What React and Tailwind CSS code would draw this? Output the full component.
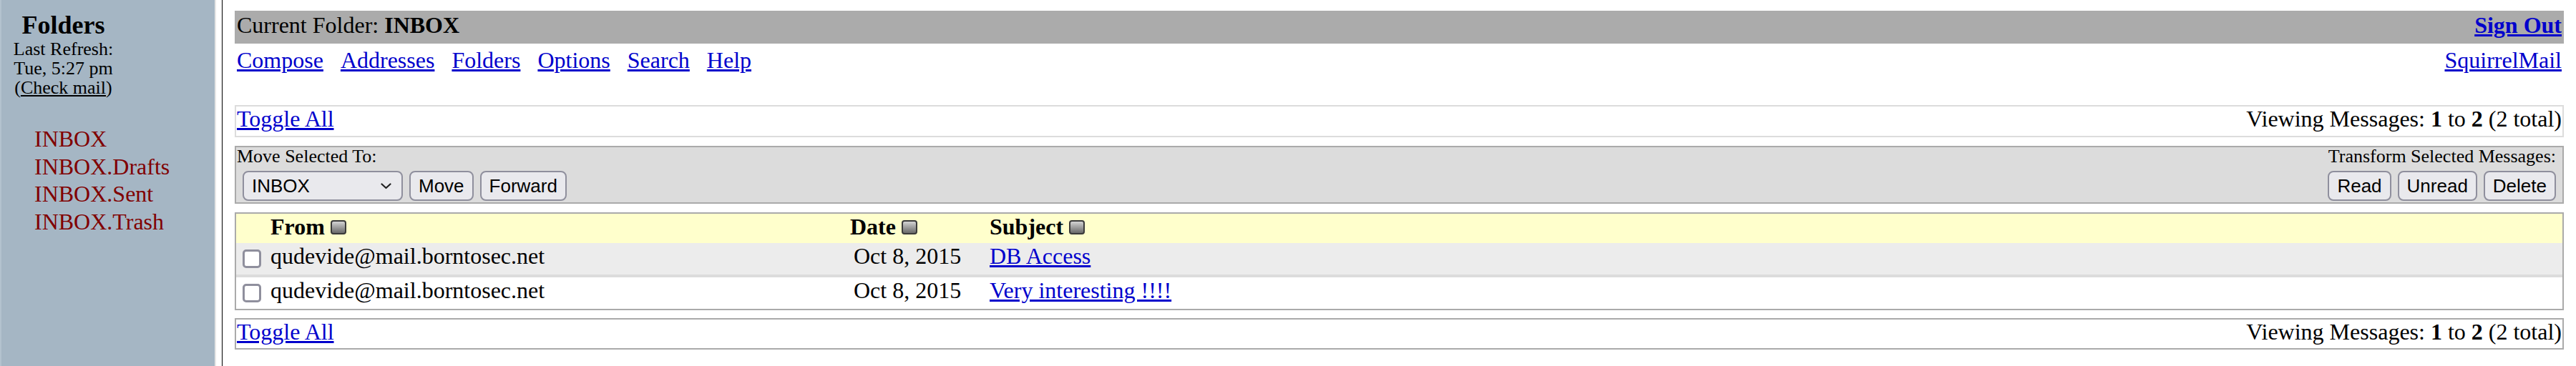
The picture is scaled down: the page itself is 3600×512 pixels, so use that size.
import React from 'react';

const link = 'text-[#0000cc] underline';

// little sort toggle next to the column names
function SortIcon() {
  return (
    <span className="inline-block w-[22px] h-[20px] ml-[8px] align-baseline rounded-[4px] border-2 border-[#3a3a3a] bg-linear-to-b from-[#d4d4d4] to-[#6a6a6a]" />
  );
}

function Check() {
  return <span className="block w-[26px] h-[26px] rounded-[5px] border-[3px] border-[#8f8f9d] bg-white" />;
}

function Btn({ children }) {
  return (
    <button className="h-[42px] px-[11px] rounded-[8px] border-2 border-[#8f8f9d] bg-[#e9e9ed] text-[26px] leading-none text-black font-['Liberation_Sans',Arial,sans-serif]">
      {children}
    </button>
  );
}

function ToggleBar({ light }) {
  return (
    <div className={`flex justify-between items-start px-[1px] border-2 ${light ? 'h-[45px] border-[#dcdcdc]' : 'h-[44px] border-[#aaaaaa]'} leading-[35px]`}>
      <a className={link}>Toggle All</a>
      <span>
        Viewing Messages: <b>1</b> to <b>2</b> (2 total)
      </span>
    </div>
  );
}

const messages = [
  { from: 'qudevide@mail.borntosec.net', date: 'Oct 8, 2015', subject: 'DB Access', bg: 'bg-[#ececec]' },
  { from: 'qudevide@mail.borntosec.net', date: 'Oct 8, 2015', subject: 'Very interesting !!!!', bg: 'bg-white' },
];

export default function App() {
  return (
    <div className="flex w-[3600px] h-[512px] bg-white text-black font-['Liberation_Serif','Times_New_Roman',serif] text-[32px]">
      {/* Left frame */}
      <aside className="w-[300px] h-full shrink-0 bg-[#a5b6c4] border-l-2 border-[#b3c2ce]">
        <div className="w-[173px] text-center pt-[15px]">
          <div className="text-[36px] font-bold leading-[40px]">Folders</div>
          <div className="text-[26px] leading-[27px]">
            Last Refresh:<br />
            Tue, 5:27 pm<br />
            (<a className="underline">Check mail</a>)
          </div>
        </div>
        <ul className="mt-[39px] pl-[46px] text-[#800000] leading-[38.5px]">
          <li>INBOX</li>
          <li>INBOX.Drafts</li>
          <li>INBOX.Sent</li>
          <li>INBOX.Trash</li>
        </ul>
      </aside>

      {/* frame border */}
      <div className="w-[11px] h-full shrink-0 border-l-2 border-[#e6e6e6] border-r border-r-black" />

      {/* Right frame */}
      <main className="flex-1 min-w-0 px-[17px] pt-[15px]">
        <div className="h-[46px] bg-[#ababab] flex justify-between px-[3px] pt-[2px] leading-[37px]">
          <span>
            Current Folder: <b>INBOX</b>
          </span>
          <a className={`${link} font-bold`}>Sign Out</a>
        </div>

        <div className="mt-[5px] flex justify-between px-[3px] leading-[37px]">
          <div className="flex gap-[24px]">
            {['Compose', 'Addresses', 'Folders', 'Options', 'Search', 'Help'].map((n) => (
              <a key={n} className={link}>{n}</a>
            ))}
          </div>
          <a className={link}>SquirrelMail</a>
        </div>

        <div className="mt-[44px]">
          <ToggleBar light />
        </div>

        {/* move / transform bar */}
        <div className="mt-[12px] h-[81px] border-2 border-[#aaaaaa] bg-[#dcdcdc] flex justify-between text-[26px]">
          <div className="pl-[1px]">
            <div className="leading-[25px]">Move Selected To:</div>
            <div className="mt-[8px] ml-[8px] flex gap-[9px]">
              <div className="w-[224px] h-[42px] rounded-[8px] border-2 border-[#8f8f9d] bg-[#e9e9ed] flex items-center justify-between pl-[11px] pr-[14px] font-['Liberation_Sans',Arial,sans-serif]">
                <span>INBOX</span>
                <svg width="15" height="9" viewBox="0 0 15 9" fill="none" stroke="#222" strokeWidth="2.2" strokeLinecap="round" strokeLinejoin="round">
                  <polyline points="1.5,1.5 7.5,7 13.5,1.5" />
                </svg>
              </div>
              <Btn>Move</Btn>
              <Btn>Forward</Btn>
            </div>
          </div>
          <div className="pr-[9px] flex flex-col items-end">
            <div className="leading-[25px]">Transform Selected Messages:</div>
            <div className="mt-[8px] flex gap-[9px]">
              <Btn>Read</Btn>
              <Btn>Unread</Btn>
              <Btn>Delete</Btn>
            </div>
          </div>
        </div>

        {/* message list */}
        <div className="mt-[12px] border-2 border-[#aaaaaa]">
          <div className="h-[41px] bg-[#ffffcc] grid grid-cols-[48px_810px_195px_1fr] font-bold leading-[36px]">
            <div />
            <div>From<SortIcon /></div>
            <div>Date<SortIcon /></div>
            <div>Subject<SortIcon /></div>
          </div>
          {messages.map((m, i) => (
            <React.Fragment key={i}>
              {i > 0 && <div className="h-[4px] bg-[#dcdcdc]" />}
              <div className={`h-[44px] ${m.bg} grid grid-cols-[48px_810px_195px_1fr] leading-[36px]`}>
                <div className="flex items-center pl-[9px]">
                  <Check />
                </div>
                <div>{m.from}</div>
                <div className="pl-[5px]">{m.date}</div>
                <div>
                  <a className={link}>{m.subject}</a>
                </div>
              </div>
            </React.Fragment>
          ))}
        </div>

        <div className="mt-[11px]">
          <ToggleBar />
        </div>
      </main>
    </div>
  );
}
